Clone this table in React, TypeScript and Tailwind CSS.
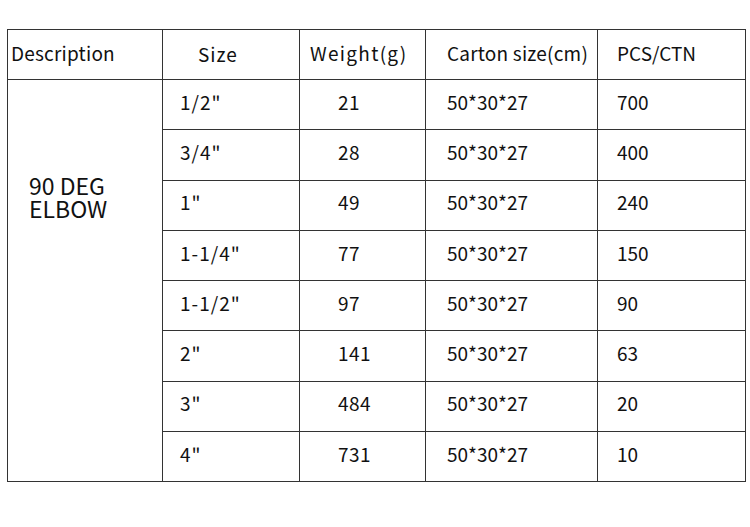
import React from "react";

const rows = [
  ["1/2\"", "21", "50*30*27", "700"],
  ["3/4\"", "28", "50*30*27", "400"],
  ["1\"", "49", "50*30*27", "240"],
  ["1-1/4\"", "77", "50*30*27", "150"],
  ["1-1/2\"", "97", "50*30*27", "90"],
  ["2\"", "141", "50*30*27", "63"],
  ["3\"", "484", "50*30*27", "20"],
  ["4\"", "731", "50*30*27", "10"],
];

export default function App() {
  const font = { fontFamily: '"Noto Sans CJK SC", "Noto Sans", sans-serif' };
  return (
    <div className="w-[750px] h-[527px] bg-white pt-[29px] pl-[7px]" style={font}>
      <table className="table-fixed border-collapse w-[738px] text-[19px] text-[#111]">
        <colgroup>
          <col className="w-[155px]" />
          <col className="w-[137px]" />
          <col className="w-[126px]" />
          <col className="w-[172px]" />
          <col className="w-[148px]" />
        </colgroup>
        <thead>
          <tr className="h-[50px]">
            <th className="border border-[#333] text-left font-normal pl-[3px] pb-[3px] tracking-[0.2px]">Description</th>
            <th className="border border-[#333] text-left font-normal pl-[35px] pt-[0px] tracking-[1px]">Size</th>
            <th className="border border-[#333] text-left font-normal pl-[10px] pb-[3px] tracking-[1.3px]">Weight(g)</th>
            <th className="border border-[#333] text-left font-normal pl-[21px] pb-[3px] tracking-[0.2px]">Carton size(cm)</th>
            <th className="border border-[#333] text-left font-normal pl-[19px] pb-[3px]">PCS/CTN</th>
          </tr>
        </thead>
        <tbody>
          {rows.map((r, i) => (
            <tr key={i} className="h-[50.25px]">
              {i === 0 && (
                <td rowSpan={8} className="border border-[#333] align-top pl-[21px] pt-[94px] text-[23px] leading-[23px]">
                  90 DEG
                  <br />
                  ELBOW
                </td>
              )}
              <td className="border border-[#333] pl-[17px] pb-[5px] tracking-[1px]">{r[0]}</td>
              <td className="border border-[#333] pl-[38px] pb-[5px] tracking-[0.5px]">{r[1]}</td>
              <td className="border border-[#333] pl-[21px] pb-[5px]">{r[2]}</td>
              <td className="border border-[#333] pl-[19px] pb-[5px]">{r[3]}</td>
            </tr>
          ))}
        </tbody>
      </table>
    </div>
  );
}
